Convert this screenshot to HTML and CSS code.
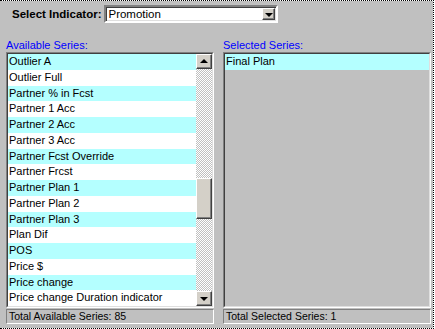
FILE: index.html
```html
<!DOCTYPE html>
<html lang="en">
<head>
    <meta charset="UTF-8">
    <meta name="viewport" content="width=device-width, initial-scale=1.0">
    <title>Select Indicator</title>
    <link rel="stylesheet" href="styles.css">
</head>
<body>
    <div class="frame">
        <div class="header">
            <label class="header-label" for="indicator">Select Indicator:</label>
            <div class="combo">
                <span class="combo-text">Promotion</span>
                <span class="btn combo-btn"><span class="arrow down"></span></span>
            </div>
        </div>

        <div class="panes">
            <div class="pane">
                <div class="pane-title">Available Series:</div>
                <div class="well">
                    <div class="well-in list-box">
                        <div class="rows">
                            <div class="row alt">Outlier A</div>
                            <div class="row">Outlier Full</div>
                            <div class="row alt">Partner % in Fcst</div>
                            <div class="row">Partner 1 Acc</div>
                            <div class="row alt">Partner 2 Acc</div>
                            <div class="row">Partner 3 Acc</div>
                            <div class="row alt">Partner Fcst Override</div>
                            <div class="row">Partner Frcst</div>
                            <div class="row alt">Partner Plan 1</div>
                            <div class="row">Partner Plan 2</div>
                            <div class="row alt">Partner Plan 3</div>
                            <div class="row">Plan Dif</div>
                            <div class="row alt">POS</div>
                            <div class="row">Price $</div>
                            <div class="row alt">Price change</div>
                            <div class="row">Price change Duration indicator</div>
                        </div>
                        <div class="scrollbar">
                            <span class="btn sb-btn"><span class="arrow up"></span></span>
                            <div class="track">
                                <span class="btn thumb"></span>
                            </div>
                            <span class="btn sb-btn"><span class="arrow down"></span></span>
                        </div>
                    </div>
                </div>
                <div class="status">Total Available Series: 85</div>
            </div>

            <div class="pane">
                <div class="pane-title">Selected Series:</div>
                <div class="well">
                    <div class="well-in selected-box">
                        <div class="row alt">Final Plan</div>
                    </div>
                </div>
                <div class="status">Total Selected Series: 1</div>
            </div>
        </div>
    </div>
</body>
</html>
```

FILE: styles.css
```css
body {
    margin: 0;
    background-color: #ffffff;
    font-family: "Liberation Sans", Arial, sans-serif;
    font-size: 11px;
    color: #000000;
}
.frame {
    width: 433px;
    height: 327px;
    background-color: #c0c0c0;
    background-clip: padding-box;
    border: 1px dotted #000000;
    border-left: none;
}
.header {
    display: flex;
    align-items: center;
    padding: 4px 0 0 12px;
}
.header-label {
    font-weight: bold;
    font-size: 11.5px;
    margin-right: 3px;
}
.combo {
    display: flex;
    align-items: center;
    justify-content: space-between;
    width: 168px;
    height: 14px;
    background-color: #ffffff;
    border: 2px solid;
    border-color: #808080 #ffffff #ffffff #808080;
    box-shadow: inset 1px 1px 0 #404040, inset -1px -1px 0 #dfdfdf;
    padding: 0 1px 0 1px;
}
.combo-text {
    padding-left: 1px;
    line-height: 14px;
    font-size: 11.5px;
}
.combo-btn {
    width: 13px;
    height: 12px;
}
.btn {
    display: flex;
    align-items: center;
    justify-content: center;
    box-sizing: border-box;
    background-color: #d4d0c8;
    border: 1px solid;
    border-color: #ffffff #404040 #404040 #ffffff;
    box-shadow: inset -1px -1px 0 #808080;
}
.arrow {
    width: 0;
    height: 0;
    border-left: 4px solid transparent;
    border-right: 4px solid transparent;
}
.arrow.down {
    border-top: 4px solid #000000;
    margin-top: 1px;
}
.arrow.up {
    border-bottom: 4px solid #000000;
    margin-bottom: 1px;
}
.panes {
    display: grid;
    grid-template-columns: 208px 208px;
    column-gap: 9px;
    padding-left: 6px;
    margin-top: 16px;
}
.pane-title {
    color: #0000ff;
    font-size: 11px;
    line-height: 13px;
}
.well {
    height: 254px;
    border: 1px solid;
    border-color: #808080 #ffffff #ffffff #808080;
}
.well-in {
    height: 252px;
    border: 1px solid;
    border-color: #404040 #dfdfdf #dfdfdf #404040;
}
.list-box {
    display: flex;
    background-color: #ffffff;
}
.selected-box {
    background-color: #c0c0c0;
}
.rows {
    flex: 1;
}
.row {
    height: 15.75px;
    line-height: 15.75px;
    padding-left: 1px;
    white-space: nowrap;
    font-size: 11px;
}
.row.alt {
    background-color: #b4ffff;
}
.scrollbar {
    display: flex;
    flex-direction: column;
    width: 16px;
}
.sb-btn {
    height: 15px;
    flex-shrink: 0;
}
.track {
    flex: 1;
    background: repeating-conic-gradient(#ffffff 0 25%, #c0c0c0 0 50%) 0 0 / 2px 2px;
    padding-top: 109px;
}
.thumb {
    height: 41px;
}
.status {
    margin-top: 1px;
    height: 13px;
    line-height: 13px;
    border: 1px solid;
    border-color: #808080 #ffffff #ffffff #808080;
    padding-left: 2px;
    font-size: 10.5px;
    white-space: nowrap;
}
```
